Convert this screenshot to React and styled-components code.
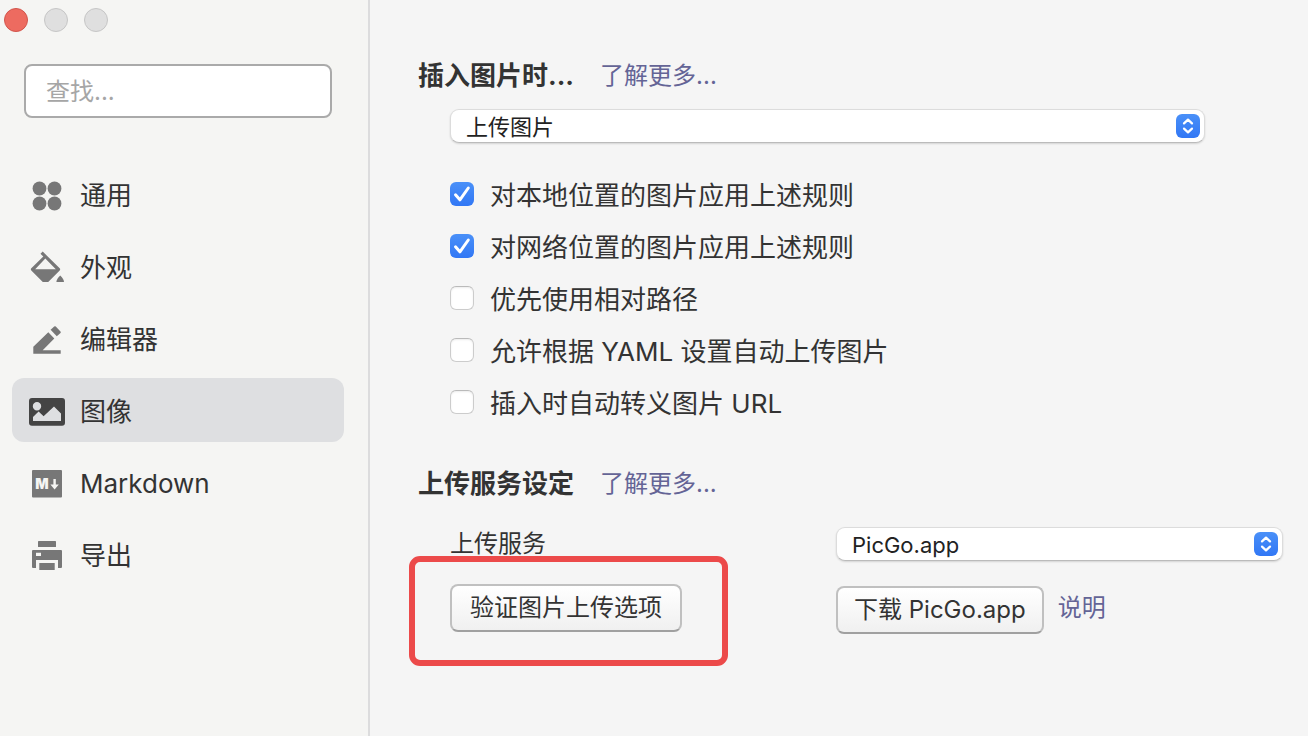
import React, { useState } from "react";
import styled, { createGlobalStyle } from "styled-components";

const GlobalStyle = createGlobalStyle`
  *, *::before, *::after { box-sizing: border-box; }
  body {
    margin: 0;
    background: #f5f5f5;
    color: #333;
    font-family: Inter, "Noto Sans CJK SC", sans-serif;
  }
  button, input, select { font: inherit; color: inherit; margin: 0; }
`;

const Window = styled.div`
  display: flex;
  min-height: 100vh;
`;

const Sidebar = styled.aside`
  flex: none;
  width: 370px;
  background: #f5f5f3;
  border-right: 2px solid #dcdcdd;
`;

const WindowControls = styled.div`
  display: flex;
  gap: 16px;
  padding: 8px 4px;
`;

const ControlDot = styled.button`
  width: 24px;
  height: 24px;
  padding: 0;
  border-radius: 50%;
  border: 1px solid ${(p) => (p.$active ? "#d2554c" : "#c6c6c6")};
  background: ${(p) => (p.$active ? "#ed6b60" : "#dfdfdf")};
`;

const SearchInput = styled.input`
  display: block;
  width: 308px;
  height: 54px;
  margin: 24px;
  padding: 0 20px;
  border: 2px solid #aaa;
  border-radius: 8px;
  background: #fff;
  font-size: 24px;
  outline: none;
  &::placeholder { color: #a6a6a6; opacity: 1; }
`;

const Nav = styled.nav`
  display: flex;
  flex-direction: column;
  gap: 8px;
  margin-top: 44px;
  padding: 0 24px 0 12px;
`;

const NavItem = styled.a`
  display: flex;
  align-items: center;
  gap: 15px;
  height: 64px;
  padding: 0 17px;
  border-radius: 12px;
  background: ${(p) => (p.$selected ? "#dedfe1" : "transparent")};
  color: #333;
  font-size: 26px;
  line-height: 36px;
  text-decoration: none;
  svg { flex: none; color: ${(p) => (p.$selected ? "#444" : "#777")}; }
`;

const ItemText = styled.span`
  padding-top: 3px;
`;

const Main = styled.main`
  flex: 1;
  min-width: 0;
  padding: 58px 25px 48px 48px;
`;

const Section = styled.section`
  & + & { margin-top: 38px; }
`;

const SectionHeader = styled.header`
  display: flex;
  align-items: center;
  gap: 26px;
`;

const Title = styled.h2`
  margin: 0;
  font-size: 26px;
  line-height: 36px;
  font-weight: 700;
`;

const Link = styled.a`
  color: #646496;
  font-size: 24px;
  line-height: 36px;
  text-decoration: none;
`;

const RuleBody = styled.div`
  margin: 15px 78px 0 32px;
`;

const SelectBox = styled.div`
  position: relative;
  height: 34px;
`;

const SelectField = styled.select`
  appearance: none;
  display: block;
  width: 100%;
  height: 34px;
  padding: 2px 40px 0 15px;
  border: 1px solid #dcdcdc;
  border-bottom-color: #bbb;
  border-radius: 9px;
  background: #fff;
  box-shadow: 0 1px 2px rgba(0, 0, 0, 0.14);
  color: #222;
  font-size: 22px;
  line-height: 30px;
  outline: none;
`;

const SelectArrows = styled.svg`
  position: absolute;
  top: 5px;
  right: 5px;
  width: 24px;
  height: 24px;
  border-radius: 6px;
  background: linear-gradient(#4a90f8, #3177f5);
  pointer-events: none;
`;

const CheckList = styled.div`
  display: flex;
  flex-direction: column;
  margin-top: 25px;
`;

const CheckLabel = styled.label`
  display: flex;
  align-items: center;
  gap: 16px;
  height: 52px;
  font-size: 26px;
  line-height: 36px;
`;

const CheckBox = styled.input`
  appearance: none;
  flex: none;
  width: 24px;
  height: 24px;
  border: 1px solid #ccc;
  border-top-color: #bababa;
  border-radius: 6px;
  background: #fff;
  box-shadow: inset 0 1px 2px rgba(0, 0, 0, 0.08);
  &:checked {
    border: 0;
    box-shadow: none;
    background: url("data:image/svg+xml,%3Csvg xmlns='http://www.w3.org/2000/svg' viewBox='0 0 24 24'%3E%3Cpath d='M5.5 12.8l4.4 5L18.3 6' fill='none' stroke='white' stroke-width='3' stroke-linecap='round' stroke-linejoin='round'/%3E%3C/svg%3E"),
      linear-gradient(#4a90f8, #3177f5);
  }
`;

const ServiceGrid = styled.div`
  display: grid;
  grid-template-columns: 386px 1fr;
  row-gap: 23px;
  margin: 25px 0 0 32px;
`;

const FieldLabel = styled.label`
  font-size: 24px;
  line-height: 34px;
`;

const Actions = styled.div`
  display: flex;
  align-items: flex-start;
  gap: 14px;
  padding-top: 2px;
  ${Link} { line-height: 44px; }
`;

const Highlighted = styled.div`
  position: relative;
  justify-self: start;
  align-self: start;
  &::after {
    content: "";
    position: absolute;
    inset: -28px -46px -34px -41px;
    border: 6px solid #ec4a4a;
    border-radius: 11px;
    pointer-events: none;
  }
`;

const Button = styled.button`
  display: block;
  height: 48px;
  padding: 0 ${(p) => (p.$wide ? "18px" : "16px")};
  border: 2px solid #c0c0c0;
  border-bottom-color: #a0a0a0;
  border-radius: 8px;
  background: linear-gradient(#fff, #f0f0f0);
  font-size: 24px;
  line-height: 36px;
  white-space: nowrap;
`;

const Icon = ({ children }) => (
  <svg width="36" height="36" viewBox="0 0 36 36" fill="currentColor" aria-hidden="true">
    {children}
  </svg>
);

const GeneralIcon = () => (
  <Icon>
    <circle cx="10.5" cy="12.5" r="6.9" />
    <circle cx="25.5" cy="12.5" r="6.9" />
    <circle cx="10.5" cy="27.5" r="6.9" />
    <circle cx="25.5" cy="27.5" r="6.9" />
  </Icon>
);

const BucketIcon = () => (
  <Icon>
    <path
      fillRule="evenodd"
      d="M13.7 3.6l17 16.6q1 1.1 0 2.2L19.2 34h-5.4L2.3 22.4q-1-1.1 0-2.2L14.3 8.6l-2.8-2.8zM16.3 10.6L6.2 21.2h20.6z"
    />
    <path d="M31.2 27.5q3.8 3.6 3.8 6.5h-7.6q0-2.9 3.8-6.5z" />
  </Icon>
);

const PencilIcon = () => (
  <Icon>
    <path d="M4.3 33.7v-7L19.3 12.2l6 6.3-11.6 11.8h18v3.4z" />
    <path d="M21.6 9.8l3.6-3.3q.8-.6 1.6 0l4.7 4.9q.6.8 0 1.6l-3.7 3.3z" />
  </Icon>
);

const ImageIcon = () => (
  <Icon>
    <path
      fillRule="evenodd"
      d="M3 6h30a3 3 0 0 1 3 3v21.7a3 3 0 0 1-3 3H3a3 3 0 0 1-3-3V9a3 3 0 0 1 3-3zM8 10a4.2 4.2 0 1 0 0 8.4 4.2 4.2 0 0 0 0-8.4zM4 29h28v-7.5L25 14.4 14.6 24.2 9.6 19.6 4 25z"
    />
  </Icon>
);

const MarkdownIcon = () => (
  <Icon>
    <rect x="3" y="6" width="30" height="27.6" rx="1" />
    <text x="6.2" y="25" fill="#f5f5f3" fontSize="14" fontWeight="900">M</text>
    <path fill="#f5f5f3" d="M24.4 15h2.4v5.6h3l-4.2 4.8-4.2-4.8h3z" />
  </Icon>
);

const PrinterIcon = () => (
  <Icon>
    <rect x="9" y="5" width="18" height="6" rx=".6" />
    <path fillRule="evenodd" d="M4 14h28a1 1 0 0 1 1 1v16a1 1 0 0 1-1 1h-3v-8H7v8H4a1 1 0 0 1-1-1V15a1 1 0 0 1 1-1zM7 16.8V20h5v-3.2z" />
    <rect x="10.3" y="27" width="15.4" height="7" />
  </Icon>
);

const navItems = [
  { label: "通用", icon: GeneralIcon },
  { label: "外观", icon: BucketIcon },
  { label: "编辑器", icon: PencilIcon },
  { label: "图像", icon: ImageIcon },
  { label: "Markdown", icon: MarkdownIcon },
  { label: "导出", icon: PrinterIcon },
];

const rules = [
  { label: "对本地位置的图片应用上述规则", on: true },
  { label: "对网络位置的图片应用上述规则", on: true },
  { label: "优先使用相对路径", on: false },
  { label: "允许根据 YAML 设置自动上传图片", on: false },
  { label: "插入时自动转义图片 URL", on: false },
];

const Select = ({ options, ...rest }) => (
  <SelectBox>
    <SelectField {...rest}>
      {options.map((o) => (
        <option key={o}>{o}</option>
      ))}
    </SelectField>
    <SelectArrows viewBox="0 0 24 24" aria-hidden="true">
      <path
        d="M8 9.4L12 5.6l4 3.8M8 14.6l4 3.8 4-3.8"
        fill="none"
        stroke="#fff"
        strokeWidth="2.2"
        strokeLinecap="round"
        strokeLinejoin="round"
      />
    </SelectArrows>
  </SelectBox>
);

export default function App() {
  const [selected, setSelected] = useState("图像");
  return (
    <Window>
      <GlobalStyle />
      <Sidebar>
        <WindowControls>
          <ControlDot $active aria-label="关闭" />
          <ControlDot aria-label="最小化" />
          <ControlDot aria-label="缩放" />
        </WindowControls>
        <SearchInput type="text" placeholder="查找..." aria-label="查找" />
        <Nav>
          {navItems.map(({ label, icon: ItemIcon }) => (
            <NavItem
              key={label}
              href="#"
              $selected={label === selected}
              onClick={() => setSelected(label)}
            >
              <ItemIcon />
              <ItemText>{label}</ItemText>
            </NavItem>
          ))}
        </Nav>
      </Sidebar>
      <Main>
        <Section>
          <SectionHeader>
            <Title>插入图片时...</Title>
            <Link href="#">了解更多...</Link>
          </SectionHeader>
          <RuleBody>
            <Select aria-label="插入图片时" options={["上传图片"]} />
            <CheckList>
              {rules.map(({ label, on }) => (
                <CheckLabel key={label}>
                  <CheckBox type="checkbox" defaultChecked={on} />
                  <ItemText>{label}</ItemText>
                </CheckLabel>
              ))}
            </CheckList>
          </RuleBody>
        </Section>
        <Section>
          <SectionHeader>
            <Title>上传服务设定</Title>
            <Link href="#">了解更多...</Link>
          </SectionHeader>
          <ServiceGrid>
            <FieldLabel htmlFor="service">上传服务</FieldLabel>
            <Select id="service" options={["PicGo.app"]} />
            <Highlighted>
              <Button type="button" $wide>验证图片上传选项</Button>
            </Highlighted>
            <Actions>
              <Button type="button">下载 PicGo.app</Button>
              <Link href="#">说明</Link>
            </Actions>
          </ServiceGrid>
        </Section>
      </Main>
    </Window>
  );
}
